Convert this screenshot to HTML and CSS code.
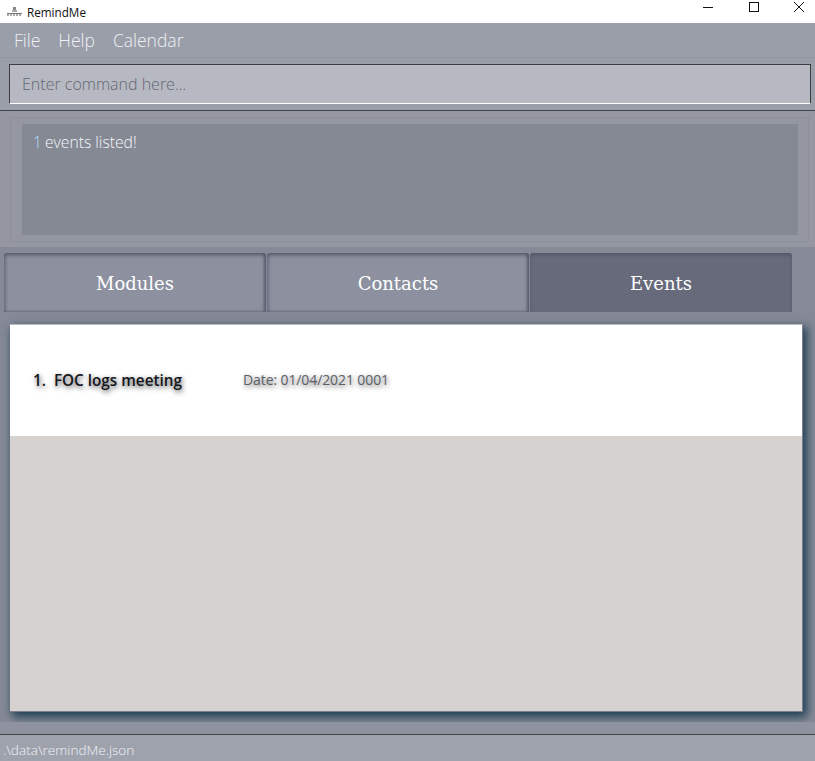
FILE: index.html
```html
<!DOCTYPE html>
<html>
<head>
    <title>RemindMe</title>
    <link rel="stylesheet" href="styles.css">
</head>
<body>
    <div class="titlebar">
        <div class="app-name">
            <svg class="app-icon" width="16" height="10" viewBox="0 0 16 10">
                <rect x="6" y="0" width="3" height="3" fill="#8a8a8a"/>
                <rect x="5" y="3" width="5" height="2" fill="#a8a8a8"/>
                <path d="M0 6.5h15" stroke="#777" stroke-width="1"/>
                <path d="M0 8h15" stroke="#555" stroke-width="1" stroke-dasharray="2 1"/>
            </svg>
            <span>RemindMe</span>
        </div>
        <div class="win-buttons">
            <svg width="10" height="10" viewBox="0 0 10 10"><path d="M0 5.5h10" stroke="#111"/></svg>
            <svg width="10" height="10" viewBox="0 0 10 10"><rect x="0.5" y="0.5" width="9" height="9" fill="none" stroke="#111"/></svg>
            <svg width="10" height="10" viewBox="0 0 10 10"><path d="M0 0l10 10M10 0l-10 10" stroke="#111"/></svg>
        </div>
    </div>

    <div class="menu">
        <span>File</span>
        <span>Help</span>
        <span>Calendar</span>
    </div>

    <div class="command">
        <div class="command-box">Enter command here...</div>
    </div>

    <div class="result">
        <div class="result-frame">
            <div class="result-text"><span class="num">1</span>events listed!</div>
        </div>
    </div>

    <div class="main">
        <div class="tabs">
            <div class="tab">Modules</div>
            <div class="tab">Contacts</div>
            <div class="tab active">Events</div>
        </div>
        <div class="list">
            <div class="card">
                <span class="card-title">1.&nbsp; FOC logs meeting</span>
                <span class="card-date">Date: 01/04/2021 0001</span>
            </div>
        </div>
    </div>

    <div class="footer-gap"></div>
    <div class="status">.\data\remindMe.json</div>
</body>
</html>
```

FILE: styles.css
```css
html, body {
    height: 100%;
}

body {
    margin: 0;
    height: 761px;
    overflow: hidden;
    display: flex;
    flex-direction: column;
    background: #9a9ea9;
    font-family: 'Open Sans', sans-serif;
    font-weight: 300;
}

.titlebar {
    height: 23px;
    background: #fff;
    display: flex;
    justify-content: space-between;
    align-items: center;
    flex-shrink: 0;
}

.app-name {
    display: flex;
    align-items: center;
    gap: 4px;
    padding-left: 7px;
    font-size: 11.7px;
    font-weight: 400;
    color: #111;
}

.win-buttons {
    display: flex;
    gap: 35.5px;
    padding-right: 11px;
    margin-top: -9px;
}

.menu {
    height: 35px;
    display: flex;
    align-items: center;
    gap: 18px;
    padding-left: 14px;
    font-size: 17.5px;
    color: #f0f1f4;
    background: #9a9ea9;
    border-bottom: 1px solid #91959f;
    box-sizing: border-box;
    flex-shrink: 0;
}

.command {
    height: 53px;
    padding: 6px 4px 0 9px;
    box-sizing: border-box;
    border-bottom: 1px solid #3f4145;
    flex-shrink: 0;
}

.command-box {
    height: 40px;
    box-sizing: border-box;
    padding-left: 12px;
    line-height: 39px;
    background: #b6b9c2;
    border: 1px solid #3a3c40;
    border-bottom: 1px solid #fff;
    font-size: 16px;
    color: #646873;
}

.result {
    height: 136px;
    padding: 6px 6px 5px 10px;
    box-sizing: border-box;
    flex-shrink: 0;
    background: #9497a2;
}

.result-frame {
    height: 100%;
    box-sizing: border-box;
    padding: 6px 10px 6px 11px;
    border: 1px solid #8b8f9a;
}

.result-text {
    height: 100%;
    box-sizing: border-box;
    padding: 6px 11px;
    background: #858994;
    font-size: 15.7px;
    line-height: 24px;
    color: #f4f6fa;
}

.num {
    color: #b0dcff;
    margin-right: 3px;
}

.main {
    height: 475px;
    flex-shrink: 0;
    padding: 6px 0 0 4px;
    box-sizing: border-box;
    background: #868a97;
    display: flex;
    flex-direction: column;
}

.tabs {
    display: grid;
    grid-template-columns: repeat(3, 1fr);
    gap: 1px;
    width: 788px;
    height: 59px;
    flex-shrink: 0;
}

.tab {
    box-sizing: border-box;
    padding-top: 2px;
    border-radius: 3px 3px 0 0;
    display: flex;
    align-items: center;
    justify-content: center;
    background: #8d919f;
    box-shadow: inset 0 2px 4px rgba(70, 74, 92, 0.7), inset -2px 0 3px rgba(70, 74, 92, 0.6), inset 2px 0 3px rgba(70, 74, 92, 0.2);
    font-family: 'DejaVu Serif', serif;
    font-weight: 400;
    font-size: 18px;
    color: #fff;
}

.tab.active {
    background: #666a7b;
    box-shadow: inset 0 2px 3px rgba(70, 74, 92, 0.6);
}

.list {
    margin: 12px 12px 0 6px;
    height: 388px;
    background: #d6d2cf;
    border-top: 1px solid #b8bbc4;
    border-right: 1px solid #7b8090;
    border-bottom: 1px solid #7b8090;
    box-sizing: border-box;
    box-shadow: 3px 4px 9px 1px rgba(24, 58, 78, 0.95);
}

.card {
    height: 111px;
    background: #fff;
    display: flex;
    align-items: center;
    padding-left: 23px;
    padding-bottom: 1px;
    box-sizing: border-box;
}

.card-title {
    width: 210px;
    flex-shrink: 0;
    font-size: 15.3px;
    font-weight: 600;
    color: #15171c;
    text-shadow: 1px 2px 5px rgba(0, 0, 0, 0.7);
}

.card-date {
    color: #5c6068;
    font-size: 14px;
    font-weight: 500;
    letter-spacing: -0.1px;
    padding-bottom: 1px;
    text-shadow: 1px 2px 5px rgba(0, 0, 0, 0.65);
}

.footer-gap {
    height: 12px;
    flex-shrink: 0;
    background: #8f939f;
}

.status {
    height: 27px;
    flex-shrink: 0;
    box-sizing: border-box;
    border-top: 1px solid #3f4145;
    background: #9ea2ad;
    padding-left: 3px;
    font-size: 13.6px;
    line-height: 29px;
    color: #f2f3f6;
}
```
